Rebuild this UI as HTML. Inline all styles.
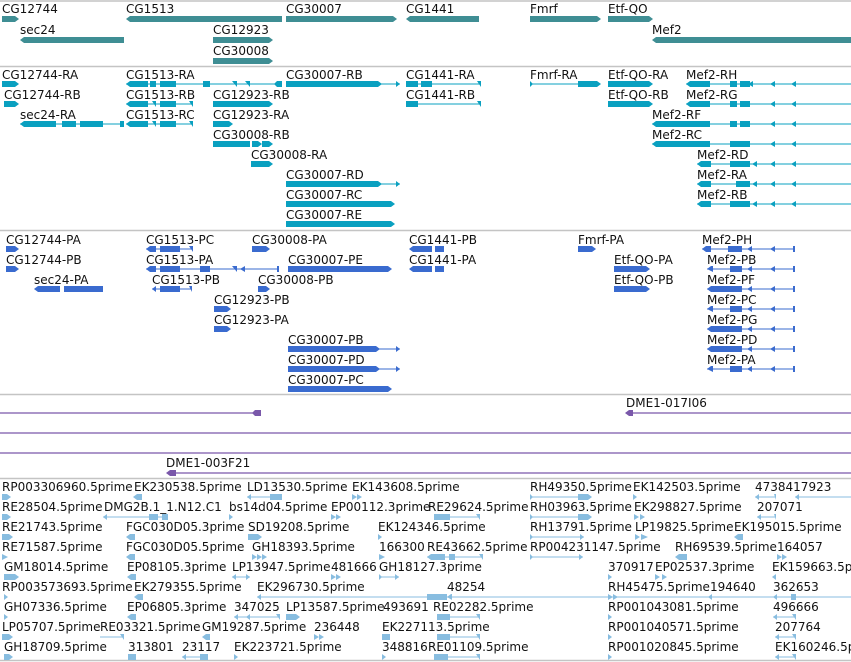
<!DOCTYPE html>
<html><head><meta charset="utf-8"><style>
html,body{margin:0;padding:0;background:#fff;width:851px;height:662px;overflow:hidden}
svg{display:block}
text{font-family:"DejaVu Sans","Liberation Sans",sans-serif;font-size:12px;fill:#111}
.g path{fill:#3f8e94}
.t path{fill:#0aa0c0}.t .l{stroke:#0aa0c0;stroke-width:1;fill:none}
.p path{fill:#3a6bcf}.p .l{stroke:#3a6bcf;stroke-width:1;fill:none}
.v path{fill:#7a58aa}.v .l{stroke:#7a58aa;stroke-width:1.2;fill:none}
.e path{fill:#88bde0}.e .l{stroke:#88bde0;stroke-width:1;fill:none}
.sep{stroke:#c4c4c4;stroke-width:1.5}
</style></head><body>
<svg width="851" height="662" viewBox="0 0 851 662" xmlns="http://www.w3.org/2000/svg">
<line class="sep" x1="0" y1="1" x2="851" y2="1"/>
<line class="sep" x1="0" y1="66.5" x2="851" y2="66.5"/>
<line class="sep" x1="0" y1="230.5" x2="851" y2="230.5"/>
<line class="sep" x1="0" y1="394.5" x2="851" y2="394.5"/>
<line class="sep" x1="0" y1="478.5" x2="851" y2="478.5"/>
<line class="sep" x1="0" y1="660.5" x2="851" y2="660.5"/>

<!-- genes -->
<g class="g">
<text x="2" y="13">CG12744</text><text x="126" y="13">CG1513</text><text x="286" y="13">CG30007</text><text x="406" y="13">CG1441</text><text x="530" y="13">Fmrf</text><text x="608" y="13">Etf-QO</text>
<text x="20" y="34">sec24</text><text x="213" y="34">CG12923</text><text x="652" y="34">Mef2</text><text x="213" y="55">CG30008</text>
<g transform="translate(0,19)">
<path d="M2 -3H15L19 0L15 3H2Z"/><path d="M130 -3H282V3H130L126 0Z"/><path d="M286 -3H393L397 0L393 3H286Z"/><path d="M410 -3H479V3H410L406 0Z"/><path d="M530 -3H597L601 0L597 3H530Z"/><path d="M608 -3H649L653 0L649 3H608Z"/>
</g>
<g transform="translate(0,40)">
<path d="M24 -3H124V3H24L20 0Z"/><path d="M213 -3H269L273 0L269 3H213Z"/><path d="M656 -3H851V3H656L652 0Z"/>
</g>
<g transform="translate(0,61)"><path d="M213 -3H269L273 0L269 3H213Z"/></g>
</g>

<!-- transcripts -->
<g class="t">
<text x="2" y="79">CG12744-RA</text><text x="126" y="79">CG1513-RA</text><text x="286" y="79">CG30007-RB</text><text x="406" y="79">CG1441-RA</text><text x="530" y="79">Fmrf-RA</text><text x="608" y="79">Etf-QO-RA</text><text x="686" y="79">Mef2-RH</text>
<text x="4" y="99">CG12744-RB</text><text x="126" y="99">CG1513-RB</text><text x="213" y="99">CG12923-RB</text><text x="406" y="99">CG1441-RB</text><text x="608" y="99">Etf-QO-RB</text><text x="686" y="99">Mef2-RG</text>
<text x="20" y="119">sec24-RA</text><text x="126" y="119">CG1513-RC</text><text x="213" y="119">CG12923-RA</text><text x="652" y="119">Mef2-RF</text>
<text x="213" y="139">CG30008-RB</text><text x="652" y="139">Mef2-RC</text>
<text x="251" y="159">CG30008-RA</text><text x="697" y="159">Mef2-RD</text>
<text x="286" y="179">CG30007-RD</text><text x="697" y="179">Mef2-RA</text>
<text x="286" y="199">CG30007-RC</text><text x="697" y="199">Mef2-RB</text>
<text x="286" y="219">CG30007-RE</text>
<g transform="translate(0,84)">
<path d="M2 -3H15L19 0L15 3H2Z"/>
<path class="l" d="M126 0H282"/><path d="M130 -3H148V3H130L126 0Z"/><path d="M150 -3H156V3H150Z"/><path d="M160 -3H176V3H160Z"/><path d="M203 -3H210V3H203Z"/><path d="M232 -3H237V3Z"/><path d="M245 -3H250V3Z"/><path d="M277 -3H282V3H277L274 0Z"/>
<path class="l" d="M286 0H400"/><path d="M286 -3H378L382 0L378 3H286Z"/><path d="M396 -3L400 0L396 3Z"/>
<path class="l" d="M406 0H481"/><path d="M406 -3H418V3H406Z"/><path d="M421 -3H432V3H421Z"/><path d="M477 -3H481V3Z"/>
<path class="l" d="M530 0H578"/><path d="M530 -3V3L533 0Z"/><path d="M578 -3H597L601 0L597 3H578Z"/>
<path d="M608 -3H649L653 0L649 3H608Z"/>
<path class="l" d="M686 0H851"/><path d="M690 -3H710V3H690L686 0Z"/><path d="M730 -3H737V3H730Z"/><path d="M740 -3H750V3H740Z"/><path d="M753 -3V3L748 0Z"/><path d="M775 -3V3L770 0Z"/><path d="M796 -3V3L791 0Z"/>
</g>
<g transform="translate(0,104)">
<path d="M4 -3H15L19 0L15 3H4Z"/>
<path class="l" d="M126 0H193"/><path d="M130 -3H148V3H130L126 0Z"/><path d="M152 -3H156V3Z"/><path d="M160 -3H176V3H160Z"/><path d="M189 -3H193V3Z"/>
<path d="M213 -3H269L273 0L269 3H213Z"/>
<path class="l" d="M406 0H481"/><path d="M406 -3H418V3H406Z"/><path d="M477 -3H481V3Z"/>
<path d="M608 -3H649L653 0L649 3H608Z"/>
<path class="l" d="M686 0H851"/><path d="M690 -3H710V3H690L686 0Z"/><path d="M730 -3H737V3H730Z"/><path d="M740 -3H750V3H740Z"/><path d="M775 -3V3L770 0Z"/><path d="M796 -3V3L791 0Z"/>
</g>
<g transform="translate(0,124)">
<path class="l" d="M20 0H124"/><path d="M24 -3H56V3H24L20 0Z"/><path d="M62 -3H76V3H62Z"/><path d="M80 -3H103V3H80Z"/><path d="M120 -3V3L124 3V-3Z"/>
<path class="l" d="M126 0H193"/><path d="M130 -3H148V3H130L126 0Z"/><path d="M152 -3H156V3Z"/><path d="M160 -3H176V3H160Z"/><path d="M189 -3H193V3Z"/>
<path d="M213 -3H229L233 0L229 3H213Z"/>
<path class="l" d="M652 0H851"/><path d="M656 -3H710V3H656L652 0Z"/><path d="M730 -3H737V3H730Z"/><path d="M740 -3H750V3H740Z"/><path d="M775 -3V3L770 0Z"/><path d="M796 -3V3L791 0Z"/>
</g>
<g transform="translate(0,144)">
<path d="M213 -3H250V3H213Z"/><path d="M252 -3H258L262 0L258 3H252Z"/><path d="M262 -3H269L273 0L269 3H262Z"/>
<path class="l" d="M652 0H851"/><path d="M656 -3H710V3H656L652 0Z"/><path d="M730 -3H750V3H730Z"/><path d="M775 -3V3L770 0Z"/><path d="M796 -3V3L791 0Z"/>
</g>
<g transform="translate(0,164)">
<path d="M251 -3H269L273 0L269 3H251Z"/>
<path class="l" d="M697 0H851"/><path d="M701 -3H711V3H701L697 0Z"/><path d="M730 -3H750V3H730Z"/><path d="M757 -3V3L752 0Z"/><path d="M775 -3V3L770 0Z"/><path d="M796 -3V3L791 0Z"/>
</g>
<g transform="translate(0,184)">
<path class="l" d="M286 0H400"/><path d="M286 -3H378L382 0L378 3H286Z"/><path d="M396 -3L400 0L396 3Z"/>
<path class="l" d="M697 0H851"/><path d="M701 -3H711V3H701L697 0Z"/><path d="M736 -3H750V3H736Z"/><path d="M757 -3V3L752 0Z"/><path d="M775 -3V3L770 0Z"/><path d="M796 -3V3L791 0Z"/>
</g>
<g transform="translate(0,204)">
<path d="M286 -3H391L395 0L391 3H286Z"/>
<path class="l" d="M697 0H851"/><path d="M701 -3H711V3H701L697 0Z"/><path d="M730 -3H750V3H730Z"/><path d="M757 -3V3L752 0Z"/><path d="M775 -3V3L770 0Z"/><path d="M796 -3V3L791 0Z"/>
</g>
<g transform="translate(0,224)"><path d="M286 -3H391L395 0L391 3H286Z"/></g>
</g>

<!-- proteins -->
<g class="p">
<text x="6" y="244">CG12744-PA</text><text x="146" y="244">CG1513-PC</text><text x="252" y="244">CG30008-PA</text><text x="409" y="244">CG1441-PB</text><text x="578" y="244">Fmrf-PA</text><text x="702" y="244">Mef2-PH</text>
<text x="6" y="264">CG12744-PB</text><text x="146" y="264">CG1513-PA</text><text x="288" y="264">CG30007-PE</text><text x="409" y="264">CG1441-PA</text><text x="614" y="264">Etf-QO-PA</text><text x="707" y="264">Mef2-PB</text>
<text x="34" y="284">sec24-PA</text><text x="152" y="284">CG1513-PB</text><text x="258" y="284">CG30008-PB</text><text x="614" y="284">Etf-QO-PB</text><text x="707" y="284">Mef2-PF</text>
<text x="214" y="304">CG12923-PB</text><text x="707" y="304">Mef2-PC</text>
<text x="214" y="324">CG12923-PA</text><text x="707" y="324">Mef2-PG</text>
<text x="288" y="344">CG30007-PB</text><text x="707" y="344">Mef2-PD</text>
<text x="288" y="364">CG30007-PD</text><text x="707" y="364">Mef2-PA</text>
<text x="288" y="384">CG30007-PC</text>
<g transform="translate(0,249)">
<path d="M6 -3H15L19 0L15 3H6Z"/>
<path class="l" d="M146 0H193"/><path d="M150 -3H156V3H150L146 0Z"/><path d="M160 -3H180V3H160Z"/><path d="M189 -3H193V3Z"/>
<path d="M252 -3H266L270 0L266 3H252Z"/>
<path d="M413 -3H432V3H413L409 0Z"/><path d="M435 -3H444V3H435Z"/>
<path d="M578 -3H592L596 0L592 3H578Z"/>
<path class="l" d="M702 0H795"/><path d="M706 -3H711V3H706L702 0Z"/><path d="M728 -3H742V3H728Z"/><path d="M752 -3V3L747 0Z"/><path d="M775 -3V3L770 0Z"/><path d="M793 -3H795V3H793Z"/>
</g>
<g transform="translate(0,269)">
<path d="M6 -3H15L19 0L15 3H6Z"/>
<path class="l" d="M146 0H279"/><path d="M150 -3H156V3H150L146 0Z"/><path d="M160 -3H180V3H160Z"/><path d="M200 -3H210V3H200Z"/><path d="M232 -3H237V3Z"/><path d="M245 -3V3L240 0Z"/><path d="M277 -3H279V3H277Z"/>
<path d="M288 -3H388L392 0L388 3H288Z"/>
<path d="M413 -3H432V3H413L409 0Z"/><path d="M435 -3H444V3H435Z"/>
<path d="M614 -3H646L650 0L646 3H614Z"/>
<path class="l" d="M707 0H795"/><path d="M711 -3H713V3L707 0Z"/><path d="M730 -3H742V3H730Z"/><path d="M752 -3V3L747 0Z"/><path d="M775 -3V3L770 0Z"/><path d="M793 -3H795V3H793Z"/>
</g>
<g transform="translate(0,289)">
<path d="M38 -3H60V3H38L34 0Z"/><path d="M64 -3H103V3H64Z"/>
<path class="l" d="M152 0H192"/><path d="M156 -3V3L152 0Z"/><path d="M160 -3H180V3H160Z"/><path d="M189 -3H192V3Z"/>
<path d="M258 -3H266L270 0L266 3H258Z"/>
<path d="M614 -3H646L650 0L646 3H614Z"/>
<path class="l" d="M707 0H795"/><path d="M711 -3H742V3H711L707 0Z"/><path d="M752 -3V3L747 0Z"/><path d="M775 -3V3L770 0Z"/><path d="M793 -3H795V3H793Z"/>
</g>
<g transform="translate(0,309)">
<path d="M214 -3H227L231 0L227 3H214Z"/>
<path class="l" d="M707 0H795"/><path d="M711 -3H713V3L707 0Z"/><path d="M730 -3H742V3H730Z"/><path d="M752 -3V3L747 0Z"/><path d="M775 -3V3L770 0Z"/><path d="M793 -3H795V3H793Z"/>
</g>
<g transform="translate(0,329)">
<path d="M214 -3H227L231 0L227 3H214Z"/>
<path class="l" d="M707 0H795"/><path d="M711 -3H742V3H711L707 0Z"/><path d="M752 -3V3L747 0Z"/><path d="M775 -3V3L770 0Z"/><path d="M793 -3H795V3H793Z"/>
</g>
<g transform="translate(0,349)">
<path class="l" d="M288 0H400"/><path d="M288 -3H376L380 0L376 3H288Z"/><path d="M396 -3L400 0L396 3Z"/>
<path class="l" d="M707 0H795"/><path d="M711 -3H742V3H711L707 0Z"/><path d="M752 -3V3L747 0Z"/><path d="M775 -3V3L770 0Z"/><path d="M793 -3H795V3H793Z"/>
</g>
<g transform="translate(0,369)">
<path class="l" d="M288 0H400"/><path d="M288 -3H376L380 0L376 3H288Z"/><path d="M396 -3L400 0L396 3Z"/>
<path class="l" d="M707 0H795"/><path d="M711 -3H713V3L707 0Z"/><path d="M730 -3H742V3H730Z"/><path d="M752 -3V3L747 0Z"/><path d="M775 -3V3L770 0Z"/><path d="M793 -3H795V3H793Z"/>
</g>
<g transform="translate(0,389)"><path d="M288 -3H388L392 0L388 3H288Z"/></g>
</g>

<!-- clones -->
<g class="v">
<path class="l" d="M0 413H256"/><path d="M255 410H261V416H255L252 413Z"/>
<text x="626" y="407">DME1-017I06</text>
<path class="l" d="M626 413H851"/><path d="M629 410H633V416H629L625 413Z"/>
<path class="l" d="M0 433H851"/><path class="l" d="M0 453H851"/>
<text x="166" y="467">DME1-003F21</text>
<path class="l" d="M170 473H851"/><path d="M170 470H176V476H170L166 473Z"/>
</g>

<!-- ESTs -->
<g class="e">
<text x="2" y="491">RP003306960.5prime</text><text x="134" y="491">EK230538.5prime</text><text x="247" y="491">LD13530.5prime</text><text x="352" y="491">EK143608.5prime</text><text x="530" y="491">RH49350.5prime</text><text x="633" y="491">EK142503.5prime</text><text x="755" y="491">4738417923</text>
<text x="2" y="511">RE28504.5prime</text><text x="104" y="511">DMG2B.1_1.N12.C1</text><text x="229" y="511">bs14d04.5prime</text><text x="331" y="511">EP00112.3prime</text><text x="428" y="511">RE29624.5prime</text><text x="530" y="511">RH03963.5prime</text><text x="634" y="511">EK298827.5prime</text><text x="757" y="511">207071</text>
<text x="2" y="531">RE21743.5prime</text><text x="126" y="531">FGC030D05.3prime</text><text x="248" y="531">SD19208.5prime</text><text x="378" y="531">EK124346.5prime</text><text x="530" y="531">RH13791.5prime</text><text x="635" y="531">LP19825.5prime</text><text x="734" y="531">EK195015.5prime</text>
<text x="2" y="551">RE71587.5prime</text><text x="126" y="551">FGC030D05.5prime</text><text x="252" y="551">GH18393.5prime</text><text x="379" y="551">166300</text><text x="427" y="551">RE43662.5prime</text><text x="530" y="551">RP004231147.5prime</text><text x="675" y="551">RH69539.5prime</text><text x="777" y="551">164057</text>
<text x="4" y="571">GM18014.5prime</text><text x="127" y="571">EP08105.3prime</text><text x="232" y="571">LP13947.5prime</text><text x="331" y="571">481666</text><text x="379" y="571">GH18127.3prime</text><text x="608" y="571">370917</text><text x="655" y="571">EP02537.3prime</text><text x="772" y="571">EK159663.5prime</text>
<text x="2" y="591">RP003573693.5prime</text><text x="134" y="591">EK279355.5prime</text><text x="257" y="591">EK296730.5prime</text><text x="447" y="591">48254</text><text x="608" y="591">RH45475.5prime</text><text x="710" y="591">194640</text><text x="773" y="591">362653</text>
<text x="4" y="611">GH07336.5prime</text><text x="127" y="611">EP06805.3prime</text><text x="234" y="611">347025</text><text x="286" y="611">LP13587.5prime</text><text x="383" y="611">493691</text><text x="433" y="611">RE02282.5prime</text><text x="608" y="611">RP001043081.5prime</text><text x="773" y="611">496666</text>
<text x="2" y="631">LP05707.5prime</text><text x="100" y="631">RE03321.5prime</text><text x="202" y="631">GM19287.5prime</text><text x="314" y="631">236448</text><text x="382" y="631">EK227113.5prime</text><text x="608" y="631">RP001040571.5prime</text><text x="775" y="631">207764</text>
<text x="4" y="651">GH18709.5prime</text><text x="128" y="651">313801</text><text x="182" y="651">23117</text><text x="234" y="651">EK223721.5prime</text><text x="382" y="651">348816</text><text x="428" y="651">RE01109.5prime</text><text x="608" y="651">RP001020845.5prime</text><text x="775" y="651">EK160246.5prime</text>
<g transform="translate(0,497)">
<path d="M2 -3H7L11 0L7 3H2Z"/><path d="M137 -3H142V3H137L133 0Z"/><path class="l" d="M247 0H282"/><path d="M251 -3V3L247 0Z"/><path d="M270 -3H282V3H270Z"/><path d="M352 -3L357 0L352 3ZM357 -3L362 0L357 3Z"/><path class="l" d="M530 0H588"/><path d="M530 -3V3L533 0Z"/><path d="M578 -3H588L592 0L588 3H578Z"/><path d="M633 -3V3L637 0Z"/><path class="l" d="M755 0H776"/><path d="M759 -3V3L755 0Z"/><path d="M774 -3H776V3Z"/><path class="l" d="M795 0H851"/><path d="M799 -3V3L795 0Z"/>
</g>
<g transform="translate(0,517)">
<path d="M2 -3H7L11 0L7 3H2Z"/><path class="l" d="M103 0H168"/><path d="M107 -3V3L103 0Z"/><path d="M149 -3H158V3H149Z"/><path d="M162 -3H168V3H162Z"/><path d="M229 -3V3L233 0Z"/><path d="M331 -3L336 0L331 3ZM336 -3L341 0L336 3Z"/><path class="l" d="M434 0H480"/><path d="M434 -3H450V3H434Z"/><path d="M476 -3H480V3Z"/><path class="l" d="M530 0H588"/><path d="M530 -3V3L533 0Z"/><path d="M578 -3H588L592 0L588 3H578Z"/><path d="M634 -3L639 0L634 3ZM640 -3L645 0L640 3Z"/><path class="l" d="M757 0H776"/><path d="M761 -3V3L757 0Z"/><path d="M774 -3H776V3Z"/>
</g>
<g transform="translate(0,537)">
<path d="M2 -3H9L13 0L9 3H2Z"/><path d="M130 -3H135V3H130L126 0Z"/><path d="M248 -3H258L262 0L258 3H248Z"/><path d="M378 -3V3L382 0Z"/><path class="l" d="M530 0H584"/><path d="M530 -3V3L533 0Z"/><path d="M580 -3L584 0L580 3Z"/><path d="M635 -3L640 0L635 3ZM641 -3L648 0L641 3Z"/><path d="M738 -3H743V3H738L734 0Z"/>
</g>
<g transform="translate(0,557)">
<path d="M2 -3V3L8 0Z"/><path d="M130 -3H135V3H130L126 0Z"/><path d="M252 -3L257 0L252 3ZM257 -3L262 0L257 3ZM262 -3L267 0L262 3Z"/><path d="M379 -3V3L385 0Z"/><path class="l" d="M427 0H483"/><path d="M431 -3H445V3H431L427 0Z"/><path d="M449 -3H455V3H449Z"/><path d="M479 -3H483V3Z"/><path class="l" d="M530 0H583"/><path d="M530 -3V3L533 0Z"/><path d="M579 -3L583 0L579 3Z"/><path d="M679 -3H687V3H679L675 0Z"/><path d="M777 -3L782 0L777 3ZM782 -3L787 0L782 3Z"/>
</g>
<g transform="translate(0,577)">
<path d="M4 -3H15L19 0L15 3H4Z"/><path d="M131 -3H136V3H131L127 0Z"/><path class="l" d="M232 0H250"/><path d="M236 -3V3L232 0Z"/><path d="M246 -3L250 0L246 3Z"/><path d="M331 -3L336 0L331 3ZM336 -3L341 0L336 3Z"/><path class="l" d="M379 0H399"/><path d="M379 -3V3L382 0Z"/><path d="M395 -3L399 0L395 3Z"/><path d="M608 -3V3L612 0Z"/><path d="M655 -3L660 0L655 3ZM662 -3L667 0L662 3Z"/><path d="M776 -3V3L772 0Z"/>
</g>
<g transform="translate(0,597)">
<path d="M4 -3V3L8 0Z"/><path d="M138 -3H143V3H138L134 0Z"/><path class="l" d="M257 0H851"/><path d="M261 -3V3L257 0Z"/><path d="M427 -3H447V3H427Z"/><path d="M451 -3H452V3L447 0Z"/><path d="M608 -3L613 0L608 3ZM613 -3L618 0L613 3Z"/><path d="M712 -3V3L708 0Z"/><path class="l" d="M773 0H796"/><path d="M777 -3V3L773 0Z"/><path d="M791 -3H796V3H791Z"/>
</g>
<g transform="translate(0,617)">
<path d="M4 -3V3L8 0Z"/><path d="M131 -3H136V3H131L127 0Z"/><path class="l" d="M234 0H280"/><path d="M238 -3V3L234 0Z"/><path d="M250 -3V3L246 0Z"/><path d="M276 -3H280V3Z"/><path d="M286 -3H296L300 0L296 3H286Z"/><path d="M386 -3V3L386 0Z"/><path class="l" d="M437 0H480"/><path d="M437 -3H450V3H437Z"/><path d="M476 -3H480V3Z"/><path d="M608 -3V3L612 0Z"/><path class="l" d="M773 0H796"/><path d="M777 -3V3L773 0Z"/><path d="M792 -3H796V3Z"/>
</g>
<g transform="translate(0,637)">
<path d="M2 -3H9L13 0L9 3H2Z"/><path class="l" d="M100 0H124"/><path d="M100 -3V3Z"/><path d="M120 -3H124V3Z"/><path d="M206 -3H210V3H206L202 0Z"/><path d="M314 -3L319 0L314 3ZM319 -3L324 0L319 3Z"/><path d="M382 -3H390V3H382Z"/><path class="l" d="M437 0H480"/><path d="M437 -3H450V3H437Z"/><path d="M476 -3H480V3Z"/><path d="M608 -3V3L612 0Z"/><path class="l" d="M775 0H796"/><path d="M779 -3V3L775 0Z"/><path d="M792 -3H796V3Z"/>
</g>
<g transform="translate(0,657)">
<path d="M4 -3H9L13 0L9 3H4Z"/><path d="M128 -3H136V3H128Z"/><path class="l" d="M182 0H208"/><path d="M186 -3V3L182 0Z"/><path d="M200 -3H208V3H200Z"/><path d="M234 -3V3L238 0Z"/><path d="M382 -3V3L386 0Z"/><path class="l" d="M434 0H480"/><path d="M434 -3H448V3H434Z"/><path d="M476 -3H480V3Z"/><path d="M608 -3V3L612 0Z"/><path class="l" d="M775 0H796"/><path d="M779 -3V3L775 0Z"/><path d="M792 -3H796V3Z"/>
</g>
</g>
</svg>
</body></html>
